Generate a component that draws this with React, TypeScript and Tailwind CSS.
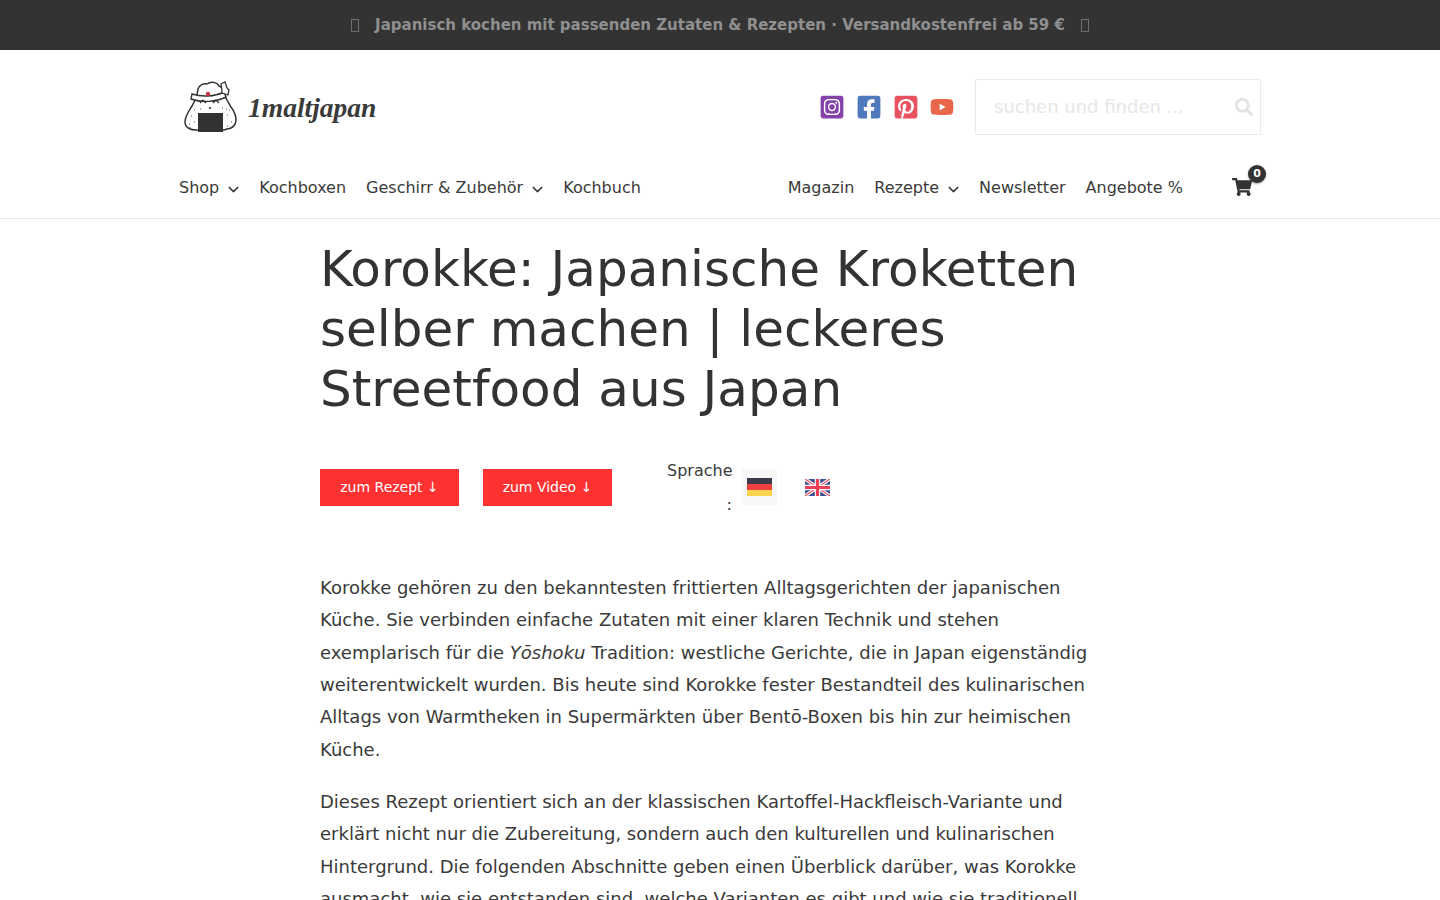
import { ChevronDown } from "lucide-react";
import {
  FaFacebookSquare,
  FaInstagramSquare,
  FaPinterestSquare,
  FaSearch,
  FaShoppingCart,
  FaYoutube,
} from "react-icons/fa";

const LEFT_NAV = [
  { label: "Shop", caret: true },
  { label: "Kochboxen" },
  { label: "Geschirr & Zubehör", caret: true },
  { label: "Kochbuch" },
];

const RIGHT_NAV = [
  { label: "Magazin" },
  { label: "Rezepte", caret: true },
  { label: "Newsletter" },
  { label: "Angebote %" },
];

function NavItem({ label, caret }: { label: string; caret?: boolean }) {
  return (
    <a className="flex items-center px-[10px] text-base text-[#3a3a3a]">
      {label}
      {caret && <ChevronDown size={17} strokeWidth={2} className="mt-[3px] ml-[6px] -mr-[3px]" />}
    </a>
  );
}

function Logo() {
  return (
    <div className="flex items-center gap-[10px]">
      <svg width="54" height="54" viewBox="0 0 54 54">
        <path
          d="M14 9c1-4 6-6 9-5 4-3 10-2 12 2 3 1 5 4 5 8 2 5 4 8 7 13 3 4 5 8 5 13 0 5-4 9-9 9l-3 1H12c-5 0-11-2-11-8 0-6 4-11 7-16 2-4 4-7 5-11z"
          fill="#fff"
          stroke="#333"
          strokeWidth="1.5"
        />
        <path d="M8 14c9 3 22 3 32-2l2 5c-10 5-24 6-35 2z" fill="#fff" stroke="#333" strokeWidth="1.4" />
        <circle cx="24" cy="14" r="2.2" fill="#c8324f" />
        <path d="M38 11l-1-7 4-2 2 6 2 2-1 5-6-2z" fill="#fff" stroke="#333" strokeWidth="1.3" />
        <path d="M16 23l3-3 3 3M29 23l3-3 3 3" fill="none" stroke="#333" strokeWidth="1.2" />
        <circle cx="26" cy="28" r="1.1" fill="#333" />
        <rect x="14" y="33" width="25" height="19" fill="#333" />
        <path
          d="M7 36h1M10 42h1M5 44h1M10 30h1M43 35h1M47 42h1M43 46h1M16 29h1M38 28h1M42 29h1M6 48h1M45 30h1"
          stroke="#555"
          strokeWidth="1.2"
        />
      </svg>
      <span className="mt-[2px] font-['Liberation_Serif',serif] text-[27.5px] font-bold italic leading-none text-[#3a3a3a]">
        1maltjapan
      </span>
    </div>
  );
}

function SocialIcons() {
  return (
    <div className="flex items-center gap-[11px]">
      <FaInstagramSquare size={26} className="text-[#8343a8]" />
      <FaFacebookSquare size={26} className="text-[#4f78bd]" />
      <FaPinterestSquare size={26} className="text-[#e9535f]" />
      <FaYoutube size={24} className="text-[#e8664a]" />
    </div>
  );
}

function Flags() {
  return (
    <div className="flex items-center gap-[27px]">
      <div className="bg-[#f7f7f7] px-[5px] py-[9px]">
        <svg width="25" height="18" viewBox="0 0 25 18" className="block">
          <rect width="25" height="6" fill="#3a3a48" />
          <rect y="6" width="25" height="6" fill="#ee4040" />
          <rect y="12" width="25" height="6" fill="#fbd34e" />
        </svg>
      </div>
      <svg width="25" height="17" viewBox="0 0 25 17" className="ml-[1px] block">
        <rect width="25" height="17" fill="#3c4f8e" />
        <path d="M0 0l25 17M25 0L0 17" stroke="#fff" strokeWidth="3.400" />
        <path d="M0 0l25 17M25 0L0 17" stroke="#ee4f5f" strokeWidth="1.200" />
        <path d="M12.500 0v17M0 8.500h25" stroke="#fff" strokeWidth="5.500" />
        <path d="M12.500 0v17M0 8.500h25" stroke="#ee4058" strokeWidth="3.200" />
      </svg>
    </div>
  );
}

export default function App() {
  return (
    <div className="h-[900px] overflow-hidden bg-white font-['DejaVu_Sans',sans-serif] text-[#3a3a3a]">
      <div className="flex h-[50px] items-center justify-center gap-[16px] bg-[#333] text-[15px] font-bold text-[#8f8f8f]">
        <span className="h-[13px] w-[8px] border border-[#6e6e6e]" />
        <span>Japanisch kochen mit passenden Zutaten &amp; Rezepten · Versandkostenfrei ab 59 €</span>
        <span className="h-[13px] w-[8px] border border-[#6e6e6e]" />
      </div>

      <header className="h-[169px] border-b border-[#e8e8e8]">
        <div className="mx-auto w-[1082px]">
          <div className="flex items-center justify-between pt-[29px]">
            <div className="pl-[5px]">
              <Logo />
            </div>
            <div className="flex items-center gap-[21px]">
              <SocialIcons />
              <div className="flex h-[56px] w-[286px] items-center justify-between rounded-[2px] border border-[#eaeaea] pr-[7px] pl-[18px] text-lg text-[#e6e6e6]">
                suchen und finden ...
                <FaSearch size={18} className="text-[#e4e4e4]" />
              </div>
            </div>
          </div>
          <nav className="mt-[41px] flex items-center justify-between">
            <div className="-ml-[10px] flex items-center">
              {LEFT_NAV.map((item) => (
                <NavItem key={item.label} {...item} />
              ))}
            </div>
            <div className="flex items-center">
              <div className="flex items-center">
                {RIGHT_NAV.map((item) => (
                  <NavItem key={item.label} {...item} />
                ))}
              </div>
              <div className="relative mr-[9px] mb-[2px] ml-[39px]">
                <FaShoppingCart size={20} className="text-[#333]" />
                <span className="absolute -top-[12px] -right-[14px] flex h-[18px] w-[18px] items-center justify-center rounded-full bg-[#333] text-[11px] font-bold text-white shadow-[0_1px_2px_rgba(0,0,0,0.35)]">
                  0
                </span>
              </div>
            </div>
          </nav>
        </div>
      </header>

      <main className="mx-auto w-[800px]">
        <h1 className="mt-[20px] text-[50px] leading-[60px] font-normal text-[#333]">
          Korokke: Japanische Kroketten selber machen | leckeres Streetfood aus Japan
        </h1>

        <div className="mt-[33px] flex items-center">
          <a className="flex h-[37px] w-[139px] items-center justify-center bg-[#ff3131] text-sm text-white">zum Rezept ↓</a>
          <a className="ml-[24px] flex h-[37px] w-[129px] items-center justify-center bg-[#ff3131] text-sm text-white">zum Video ↓</a>
          <div className="mt-[2px] ml-[55px] w-[65px] text-right text-base leading-[34px]">Sprache :</div>
          <div className="ml-[10px]">
            <Flags />
          </div>
        </div>

        <p className="mt-[49.8px] text-lg leading-[32.4px]">
          Korokke gehören zu den bekanntesten frittierten Alltagsgerichten der japanischen Küche. Sie verbinden einfache Zutaten mit einer klaren Technik und stehen exemplarisch für die <em>Yōshoku</em> Tradition: westliche Gerichte, die in Japan eigenständig weiterentwickelt wurden. Bis heute sind Korokke fester Bestandteil des kulinarischen Alltags von Warmtheken in Supermärkten über Bentō-Boxen bis hin zur heimischen Küche.
        </p>
        <p className="mt-[19.7px] text-lg leading-[32.4px]">
          Dieses Rezept orientiert sich an der klassischen Kartoffel-Hackfleisch-Variante und erklärt nicht nur die Zubereitung, sondern auch den kulturellen und kulinarischen Hintergrund. Die folgenden Abschnitte geben einen Überblick darüber, was Korokke ausmacht, wie sie entstanden sind, welche Varianten es gibt und wie sie traditionell
        </p>
      </main>
    </div>
  );
}
